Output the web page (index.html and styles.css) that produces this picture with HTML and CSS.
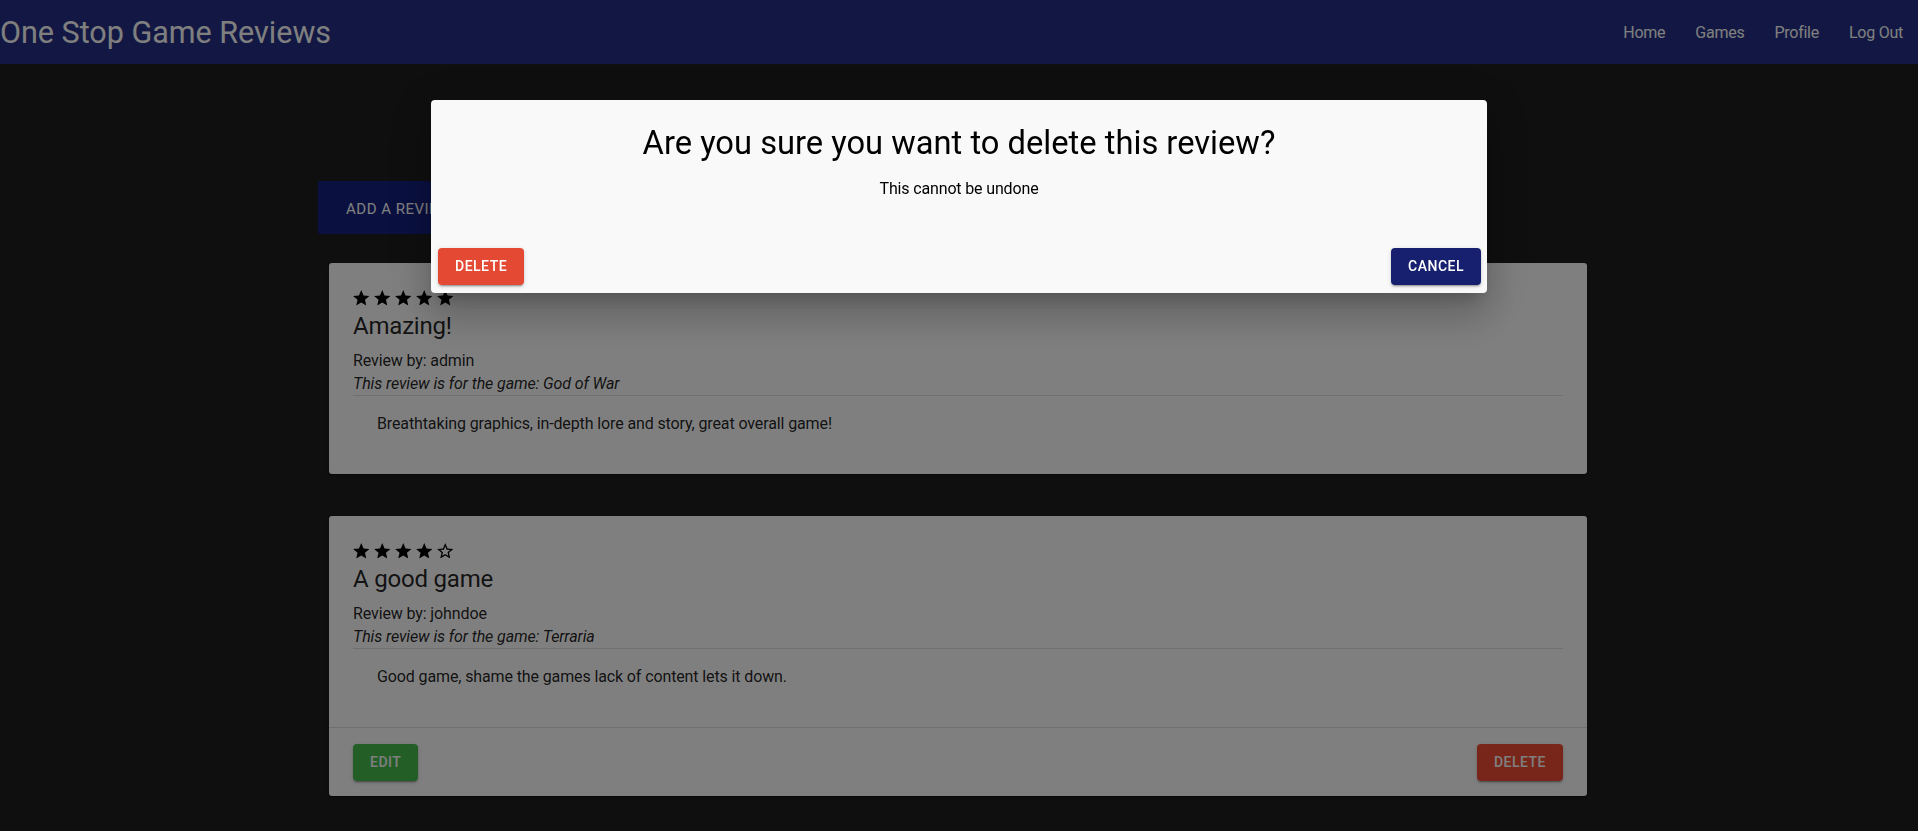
FILE: index.html
```html
<!DOCTYPE html>
<html lang="en">
<head>
<meta charset="utf-8">
<title>One Stop Game Reviews</title>
<link rel="stylesheet" href="styles.css">
</head>
<body>
<svg class="defs" width="0" height="0" aria-hidden="true">
  <defs>
    <symbol id="star" viewBox="2 2 20 19"><path d="M12 17.27L18.18 21l-1.64-7.03L22 9.24l-7.19-.61L12 2 9.19 8.63 2 9.24l5.46 4.73L5.82 21z"/></symbol>
    <symbol id="star-border" viewBox="2 2 20 19"><path d="M22 9.24l-7.19-.62L12 2 9.19 8.63 2 9.24l5.46 4.73L5.82 21 12 17.27 18.18 21l-1.63-7.03L22 9.24zM12 15.4l-3.76 2.27 1-4.28-3.32-2.88 4.38-.38L12 6.1l1.71 4.04 4.38.38-3.32 2.88 1 4.28L12 15.4z"/></symbol>
  </defs>
</svg>

<header class="appbar">
  <h1 class="brand">One Stop Game Reviews</h1>
  <nav class="nav">
    <a href="#">Home</a>
    <a href="#">Games</a>
    <a href="#">Profile</a>
    <a href="#">Log Out</a>
  </nav>
</header>

<main class="container">
  <button class="btn-add">ADD A REVIEW</button>

  <section class="reviews">
    <article class="card">
      <div class="card-content">
        <div class="stars">
          <svg class="star"><use href="#star"/></svg>
          <svg class="star"><use href="#star"/></svg>
          <svg class="star"><use href="#star"/></svg>
          <svg class="star"><use href="#star"/></svg>
          <svg class="star"><use href="#star"/></svg>
        </div>
        <h2 class="review-title">Amazing!</h2>
        <p class="review-by">Review by: admin</p>
        <p class="review-game">This review is for the game: God of War</p>
        <hr class="divider">
        <p class="review-body">Breathtaking graphics, in-depth lore and story, great overall game!</p>
      </div>
    </article>

    <article class="card">
      <div class="card-content">
        <div class="stars">
          <svg class="star"><use href="#star"/></svg>
          <svg class="star"><use href="#star"/></svg>
          <svg class="star"><use href="#star"/></svg>
          <svg class="star"><use href="#star"/></svg>
          <svg class="star"><use href="#star-border"/></svg>
        </div>
        <h2 class="review-title">A good game</h2>
        <p class="review-by">Review by: johndoe</p>
        <p class="review-game">This review is for the game: Terraria</p>
        <hr class="divider">
        <p class="review-body">Good game, shame the games lack of content lets it down.</p>
      </div>
      <div class="card-actions">
        <button class="btn btn-edit">EDIT</button>
        <button class="btn btn-delete">DELETE</button>
      </div>
    </article>
  </section>
</main>

<div class="backdrop"></div>

<div class="dialog" role="dialog" aria-modal="true">
  <h2 class="dialog-title">Are you sure you want to delete this review?</h2>
  <p class="dialog-text">This cannot be undone</p>
  <div class="dialog-actions">
    <button class="btn btn-danger">DELETE</button>
    <button class="btn btn-cancel">CANCEL</button>
  </div>
</div>
</body>
</html>
```

FILE: styles.css
```css
* { box-sizing: border-box; }

html, body {
  margin: 0;
  padding: 0;
}

body {
  background: #1e1e1e;
  font-family: Roboto, "Liberation Sans", Arial, sans-serif;
  color: rgba(0, 0, 0, 0.87);
  min-height: 831px;
  overflow: hidden;
}

.defs { position: absolute; }

/* App bar */
.appbar {
  height: 64px;
  background: #243086;
  display: flex;
  align-items: center;
  justify-content: space-between;
  padding: 0 15px 0 0;
}

.brand {
  margin: 0;
  padding-top: 1px;
  font-size: 30.5px;
  font-weight: 400;
  line-height: 1.235;
  color: #fff;
  letter-spacing: 0;
}

.nav {
  display: flex;
  gap: 30px;
  padding-top: 1px;
}

.nav a {
  color: #fff;
  text-decoration: none;
  font-size: 16px;
  letter-spacing: -0.25px;
  line-height: 24px;
}

/* Main */
.container {
  width: 1280px;
  margin: 0 auto;
  padding-top: 117px;
}

.btn-add {
  display: block;
  border: 0;
  border-radius: 2px;
  background: #142080;
  color: #fff;
  font-family: inherit;
  font-size: 15px;
  font-weight: 400;
  letter-spacing: 0.5px;
  line-height: 25px;
  padding: 16px 28px 12px;
  margin-left: -1px;
}

.reviews {
  display: flex;
  flex-direction: column;
  gap: 42px;
  padding: 29px 12px 0 10px;
}

.card {
  background: #fff;
  border-radius: 3px;
  box-shadow: 0 2px 1px -1px rgba(0,0,0,0.2), 0 1px 1px 0 rgba(0,0,0,0.14), 0 1px 3px 0 rgba(0,0,0,0.12);
}

.card-content {
  padding: 25px 24px 22px 24px;
}

.stars {
  display: flex;
  align-items: center;
  gap: 4.5px;
  height: 20px;
}

.star {
  width: 16.5px;
  height: 15.5px;
  fill: #000;
}

.review-title {
  margin: 0 0 5px;
  font-size: 24px;
  font-weight: 400;
  line-height: 36px;
  letter-spacing: -0.2px;
}

.review-by,
.review-game {
  margin: 0;
  font-size: 16px;
  line-height: 23px;
  letter-spacing: -0.12px;
}

.review-game {
  font-style: italic;
}

.divider {
  margin: 0;
  border: 0;
  border-top: 1px solid rgba(0, 0, 0, 0.12);
}

.review-body {
  margin: 16px 0;
  padding-left: 24px;
  font-size: 16px;
  line-height: 24px;
  letter-spacing: -0.12px;
}

.card-actions {
  display: flex;
  justify-content: space-between;
  padding: 16px 24px 15px;
  border-top: 1px solid rgba(0, 0, 0, 0.12);
}

/* Buttons */
.btn {
  border: 0;
  border-radius: 4px;
  font-family: inherit;
  font-size: 14px;
  font-weight: 500;
  letter-spacing: 0.5px;
  line-height: 24.5px;
  padding: 6px 17px;
  color: #fff;
  box-shadow: 0 3px 1px -2px rgba(0,0,0,0.2), 0 2px 2px 0 rgba(0,0,0,0.14), 0 1px 5px 0 rgba(0,0,0,0.12);
}

.btn-edit { background: #46bc4e; }
.btn-delete { background: #f04c34; }
.btn-danger { background: #e44a33; }
.btn-cancel { background: #16206f; }

/* Modal */
.backdrop {
  position: fixed;
  inset: 0;
  background: rgba(0, 0, 0, 0.5);
}

.dialog {
  position: fixed;
  top: 100px;
  left: 50%;
  transform: translateX(-50%);
  width: 1056px;
  background: #f9f9f9;
  border-radius: 4px;
  color: #000;
  box-shadow: 0 11px 15px -7px rgba(0,0,0,0.2), 0 24px 38px 3px rgba(0,0,0,0.14), 0 9px 46px 8px rgba(0,0,0,0.12);
}

.dialog-title {
  margin: 0;
  padding-top: 22px;
  font-size: 32.7px;
  font-weight: 400;
  line-height: 42px;
  text-align: center;
}

.dialog-text {
  margin: 13px 0 0;
  font-size: 16px;
  line-height: 24px;
  letter-spacing: -0.15px;
  text-align: center;
}

.dialog-actions {
  display: flex;
  justify-content: space-between;
  margin-top: 47px;
  padding: 0 6px 8px 7px;
}
```
